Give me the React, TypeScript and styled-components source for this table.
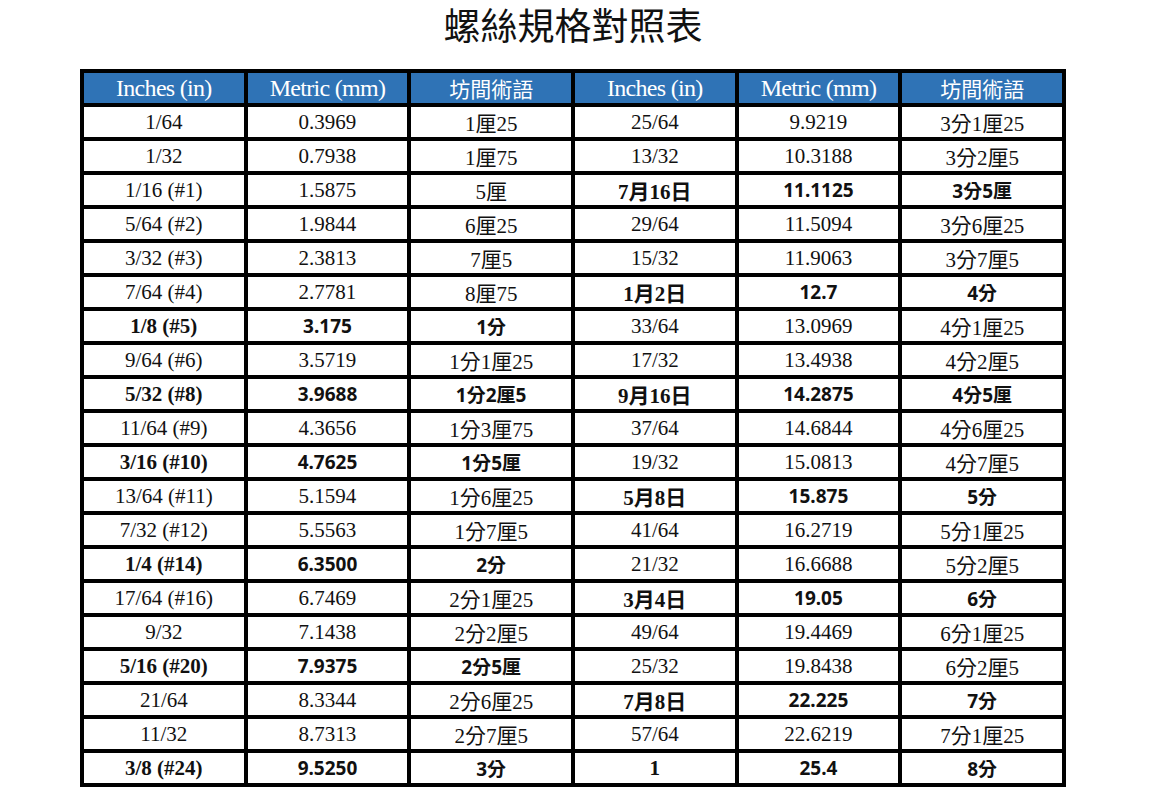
import React from 'react';
import styled, { createGlobalStyle } from 'styled-components';

type Row = [string, string, string, boolean];

const leftRows: Row[] = [
  ['1/64', '0.3969', '1厘25', false],
  ['1/32', '0.7938', '1厘75', false],
  ['1/16 (#1)', '1.5875', '5厘', false],
  ['5/64 (#2)', '1.9844', '6厘25', false],
  ['3/32 (#3)', '2.3813', '7厘5', false],
  ['7/64 (#4)', '2.7781', '8厘75', false],
  ['1/8 (#5)', '3.175', '1分', true],
  ['9/64 (#6)', '3.5719', '1分1厘25', false],
  ['5/32 (#8)', '3.9688', '1分2厘5', true],
  ['11/64 (#9)', '4.3656', '1分3厘75', false],
  ['3/16 (#10)', '4.7625', '1分5厘', true],
  ['13/64 (#11)', '5.1594', '1分6厘25', false],
  ['7/32 (#12)', '5.5563', '1分7厘5', false],
  ['1/4 (#14)', '6.3500', '2分', true],
  ['17/64 (#16)', '6.7469', '2分1厘25', false],
  ['9/32', '7.1438', '2分2厘5', false],
  ['5/16 (#20)', '7.9375', '2分5厘', true],
  ['21/64', '8.3344', '2分6厘25', false],
  ['11/32', '8.7313', '2分7厘5', false],
  ['3/8 (#24)', '9.5250', '3分', true],
];

const rightRows: Row[] = [
  ['25/64', '9.9219', '3分1厘25', false],
  ['13/32', '10.3188', '3分2厘5', false],
  ['7月16日', '11.1125', '3分5厘', true],
  ['29/64', '11.5094', '3分6厘25', false],
  ['15/32', '11.9063', '3分7厘5', false],
  ['1月2日', '12.7', '4分', true],
  ['33/64', '13.0969', '4分1厘25', false],
  ['17/32', '13.4938', '4分2厘5', false],
  ['9月16日', '14.2875', '4分5厘', true],
  ['37/64', '14.6844', '4分6厘25', false],
  ['19/32', '15.0813', '4分7厘5', false],
  ['5月8日', '15.875', '5分', true],
  ['41/64', '16.2719', '5分1厘25', false],
  ['21/32', '16.6688', '5分2厘5', false],
  ['3月4日', '19.05', '6分', true],
  ['49/64', '19.4469', '6分1厘25', false],
  ['25/32', '19.8438', '6分2厘5', false],
  ['7月8日', '22.225', '7分', true],
  ['57/64', '22.6219', '7分1厘25', false],
  ['1', '25.4', '8分', true],
];

const headers = ['Inches (in)', 'Metric (mm)', '坊間術語', 'Inches (in)', 'Metric (mm)', '坊間術語'];

function Half({ row, side }: { row: Row; side: string }) {
  const [inch, mm, term, bold] = row;
  return (
    <>
      <Cell key={side + 'in'} $bold={bold}>{inch}</Cell>
      <Cell key={side + 'mm'} $bold={bold} $sans={bold}>{mm}</Cell>
      <Cell key={side + 'term'} $bold={bold} $sans={bold}>{term}</Cell>
    </>
  );
}

export default function App() {
  return (
    <Page>
      <GlobalStyle />
      <Title>螺絲規格對照表</Title>
      <Table>
        <thead>
          <tr>
            {headers.map((h, i) => (
              <HeadCell key={i} $cjk={h === '坊間術語'}>{h}</HeadCell>
            ))}
          </tr>
        </thead>
        <tbody>
          {leftRows.map((row, i) => (
            <tr key={i}>
              <Half row={row} side='l' />
              <Half row={rightRows[i]} side='r' />
            </tr>
          ))}
        </tbody>
      </Table>
    </Page>
  );
}

const GlobalStyle = createGlobalStyle`
  body {
    margin: 0;
    background: #ffffff;
  }
`;

const Page = styled.div`
  width: 986px;
  padding: 0 0 0 80px;
  display: flex;
  flex-direction: column;
`;

const Title = styled.h1`
  margin: 0 0 21px;
  text-align: center;
  font-family: 'Noto Sans CJK TC', sans-serif;
  font-weight: 400;
  font-size: 37px;
  line-height: 48px;
  color: #111111;
`;

const Table = styled.table`
  width: 986px;
  table-layout: fixed;
  border-collapse: separate;
  border-spacing: 4px;
  background: #000000;
`;

const HeadCell = styled.th<{ $cjk?: boolean }>`
  height: 30px;
  padding: 0;
  background: #2f73b6;
  color: #ffffff;
  font-family: ${(p) =>
    p.$cjk ? "'Noto Sans CJK TC', sans-serif" : "'Liberation Serif', serif"};
  font-weight: 400;
  font-size: ${(p) => (p.$cjk ? '21px' : '24px')};
  letter-spacing: ${(p) => (p.$cjk ? '0' : '-0.7px')};
  text-align: center;
  vertical-align: middle;
`;

const Cell = styled.td<{ $bold?: boolean; $sans?: boolean }>`
  height: 30px;
  padding: 0;
  background: #ffffff;
  color: #111111;
  font-family: ${(p) =>
    p.$sans
      ? "'Noto Sans', 'Noto Sans CJK TC', sans-serif"
      : "'Liberation Serif', 'Noto Sans CJK TC', serif"};
  font-weight: ${(p) => (p.$bold ? 700 : 400)};
  font-size: ${(p) => (p.$sans ? '19px' : '21px')};
  text-align: center;
  vertical-align: middle;
  white-space: nowrap;
`;
